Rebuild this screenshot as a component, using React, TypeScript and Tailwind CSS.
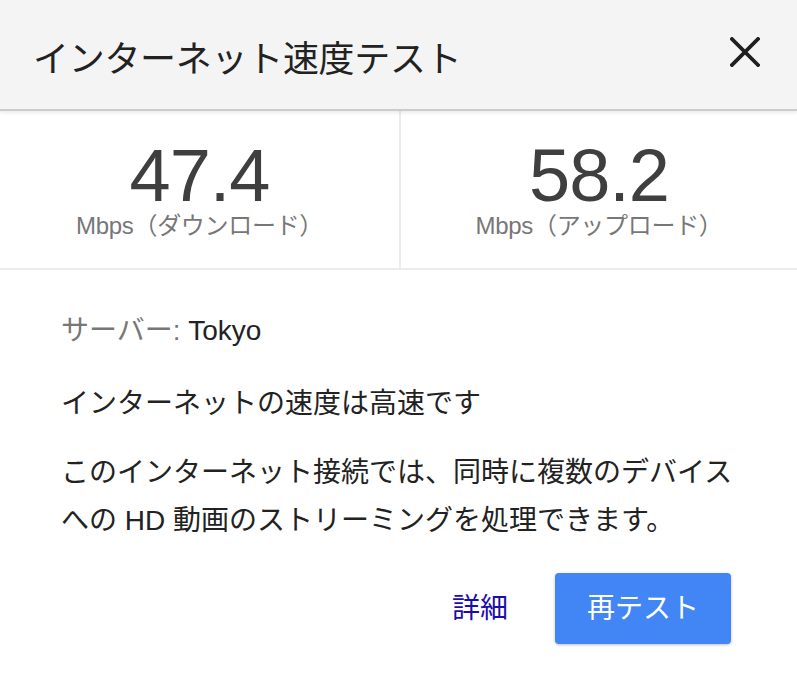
import React from 'react';

const FONT = "font-['Liberation_Sans','Noto_Sans_CJK_JP',sans-serif]";

type Stat = { value: string; label: string };

const stats: Stat[] = [
    { value: '47.4', label: 'Mbps（ダウンロード）' },
    { value: '58.2', label: 'Mbps（アップロード）' },
];

const CloseIcon: React.FC = () => (
    <svg width="30" height="30" viewBox="0 0 30 30" className="block">
        <path d="M2 2 L28 28 M28 2 L2 28" stroke="#1f1f1f" strokeWidth="3.8" strokeLinecap="square" fill="none" />
    </svg>
);

export default function App() {
    return (
        <div className={`w-[797px] h-[674px] bg-white ${FONT} overflow-hidden`}>
            {/* Header */}
            <div className="relative h-[111px] bg-[#f4f4f4] border-b-2 border-[#cccccc] shadow-[0_2px_3px_rgba(0,0,0,0.08)] flex items-start justify-between pl-[33px] pr-[37px]">
                <h1 className="mt-[42px] text-[36px] leading-[36px] text-[#222] font-normal tracking-[-0.3px]">
                    インターネット速度テスト
                </h1>
                <button className="mt-[37px]" aria-label="閉じる">
                    <CloseIcon />
                </button>
            </div>

            {/* Speeds */}
            <div className="grid grid-cols-[399px_2px_396px] border-b-2 border-[#ececec]">
                {stats.map((s, i) => (
                    <React.Fragment key={s.label}>
                        {i === 1 && <div className="bg-[#ececec]" />}
                        <div className="flex flex-col items-center pt-[29px] pb-[30px]">
                            <div className="text-[74px] leading-[72px] text-[#3f3f3f] tracking-[-1px]">{s.value}</div>
                            <div className="mt-[2px] text-[24px] leading-[24px] text-[#777] whitespace-nowrap tracking-[-0.3px]">{s.label}</div>
                        </div>
                    </React.Fragment>
                ))}
            </div>

            {/* Body */}
            <div className="pl-[61px] pr-[50px] pt-[37px] text-[28px] text-[#222]">
                <p className="leading-[48px]">
                    <span className="text-[#777]">サーバー: </span>
                    <span>Tokyo</span>
                </p>
                <p className="mt-[25px] leading-[48px]">インターネットの速度は高速です</p>
                <p className="mt-[21px] leading-[48px] w-[686px]">
                    このインターネット接続では、同時に複数のデバイスへの HD 動画のストリーミングを処理できます。
                </p>
                <div className="mt-[28px] flex items-center justify-end gap-[47px] pr-[16px]">
                    <a href="#" className="text-[#1a0dab] text-[28px] leading-[28px]">詳細</a>
                    <button className="w-[176px] h-[71px] rounded-[4px] bg-[#4285f4] text-white text-[28px] shadow-[0_1px_3px_rgba(0,0,0,0.25)]">
                        再テスト
                    </button>
                </div>
            </div>
        </div>
    );
}
